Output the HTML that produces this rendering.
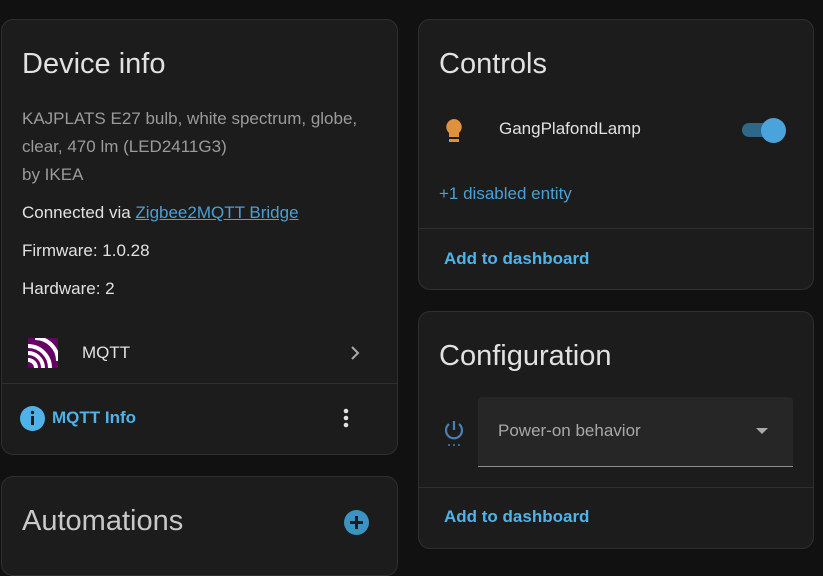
<!DOCTYPE html>
<html><head><style>
body{margin:0;width:823px;height:557px;background:#111111;font-family:"Liberation Sans",sans-serif;overflow:hidden;position:relative;color:#e1e1e1}
.card{position:absolute;background:#1c1c1c;border:1px solid #2f2f2f;border-radius:12px;box-sizing:border-box}
.a{position:absolute;white-space:nowrap}
.h{font-size:29px;color:#e1e1e1}
.t{font-size:17px}
.link{color:#4fb3ea;font-weight:bold;font-size:17px}
.sep{position:absolute;left:0;right:0;height:1px;background:#2f2f2f}
</style></head><body>
<div class="card" style="left:1px;top:19px;width:397px;height:436px">
  <div class="a h" style="left:20px;top:28px">Device info</div>
  <div class="a t" style="left:20px;top:85px;color:#9b9b9b;line-height:28px">KAJPLATS E27 bulb, white spectrum, globe,<br>clear, 470 lm (LED2411G3)<br>by IKEA</div>
  <div class="a t" style="left:20px;top:183px">Connected via <span style="color:#4a9fd5;text-decoration:underline">Zigbee2MQTT Bridge</span></div>
  <div class="a t" style="left:20px;top:221px">Firmware: 1.0.28</div>
  <div class="a t" style="left:20px;top:259px">Hardware: 2</div>
  <svg class="a" style="left:26px;top:318px" width="30" height="30" viewBox="0 0 30 30"><rect width="30" height="30" fill="#660066"/><path d="M0 8 A22 22 0 0 1 22 30 M0 15 A15 15 0 0 1 15 30 M0 22 A8 8 0 0 1 8 30 M7 0 A23 23 0 0 1 30 23" stroke="#fff" stroke-width="4" fill="none"/></svg>
  <div class="a t" style="left:80px;top:323px">MQTT</div>
  <svg class="a" style="left:346px;top:324px" width="14" height="18"><path d="M4 3 L10 9 L4 15" stroke="#aaa" stroke-width="2" fill="none"/></svg>
  <div class="sep" style="top:363px"></div>
  <svg class="a" style="left:18px;top:386px" width="25" height="25"><circle cx="12.5" cy="12.5" r="12.5" fill="#4fb3ea"/><rect x="11" y="10" width="3" height="9" fill="#1c1c1c"/><circle cx="12.5" cy="6.5" r="1.7" fill="#1c1c1c"/></svg>
  <div class="a link" style="left:50px;top:388px">MQTT Info</div>
  <svg class="a" style="left:340px;top:387px" width="8" height="24"><circle cx="4" cy="4" r="2.3" fill="#e1e1e1"/><circle cx="4" cy="11" r="2.3" fill="#e1e1e1"/><circle cx="4" cy="18" r="2.3" fill="#e1e1e1"/></svg>
</div>
<div class="card" style="left:1px;top:476px;width:397px;height:100px">
  <div class="a h" style="left:20px;top:28px;color:#c8c8c8">Automations</div>
  <svg class="a" style="left:342px;top:33px" width="25" height="25"><circle cx="12.5" cy="12.5" r="12.5" fill="#3a93c0"/><path d="M12.5 6v13M6 12.5h13" stroke="#1c1c1c" stroke-width="3"/></svg>
</div>
<div class="card" style="left:418px;top:19px;width:396px;height:271px">
  <div class="a h" style="left:20px;top:28px">Controls</div>
  <svg class="a" style="left:24px;top:98px" width="22" height="26" viewBox="0 0 22 26"><path d="M11 1a8 8 0 0 0-5 14v4h10v-4a8 8 0 0 0-5-14z" fill="#e0913e"/><rect x="6" y="21" width="10" height="3" fill="#e0913e"/></svg>
  <div class="a t" style="left:80px;top:99px">GangPlafondLamp</div>
  <div class="a" style="left:323px;top:103px;width:36px;height:14px;border-radius:7px;background:#2e6889"></div>
  <div class="a" style="left:342px;top:98px;width:25px;height:25px;border-radius:50%;background:#4aa3da"></div>
  <div class="a t" style="left:20px;top:164px;color:#4a9fd5">+1 disabled entity</div>
  <div class="sep" style="top:208px"></div>
  <div class="a link" style="left:25px;top:229px">Add to dashboard</div>
</div>
<div class="card" style="left:418px;top:311px;width:396px;height:238px">
  <div class="a h" style="left:20px;top:28px">Configuration</div>
  <svg class="a" style="left:24px;top:107px" width="22" height="28"><path d="M11 2v9M6 5a8 8 0 1 0 10 0" stroke="#4a7fb0" stroke-width="2.2" fill="none"/><circle cx="6" cy="26" r="1" fill="#4a7fb0"/><circle cx="11" cy="26" r="1" fill="#4a7fb0"/><circle cx="16" cy="26" r="1" fill="#4a7fb0"/></svg>
  <div class="a" style="left:59px;top:85px;width:315px;height:69px;background:#262626;border-radius:4px 4px 0 0;border-bottom:1px solid #8c8c8c"></div>
  <div class="a t" style="left:79px;top:109px;color:#a8a8a8;font-size:17px">Power-on behavior</div>
  <svg class="a" style="left:337px;top:115px" width="12" height="8"><path d="M0 1h12L6 7z" fill="#aaa"/></svg>
  <div class="sep" style="top:175px"></div>
  <div class="a link" style="left:25px;top:195px">Add to dashboard</div>
</div>
</body></html>
